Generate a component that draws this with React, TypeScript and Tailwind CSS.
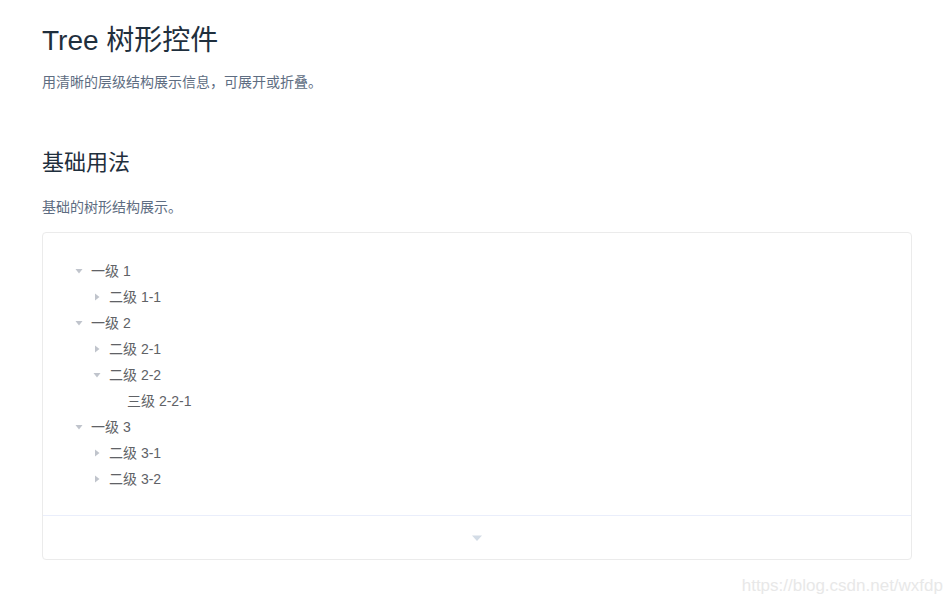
type Node = { label: string; children?: Node[]; open?: boolean };

const data: Node[] = [
  { label: "一级 1", open: true, children: [{ label: "二级 1-1", children: [{ label: "三级 1-1-1" }] }] },
  {
    label: "一级 2",
    open: true,
    children: [
      { label: "二级 2-1", children: [{ label: "三级 2-1-1" }] },
      { label: "二级 2-2", open: true, children: [{ label: "三级 2-2-1" }] },
    ],
  },
  {
    label: "一级 3",
    open: true,
    children: [
      { label: "二级 3-1", children: [{ label: "三级 3-1-1" }] },
      { label: "二级 3-2", children: [{ label: "三级 3-2-1" }] },
    ],
  },
];

function Caret({ open, hidden }: { open?: boolean; hidden?: boolean }) {
  return (
    <span className="w-[24px] h-[26px] flex items-center justify-center">
      {!hidden && (
        <svg
          width="8"
          height="8"
          viewBox="0 0 8 8"
          className={open ? "rotate-90" : ""}
        >
          <path d="M2 0.5 L6.5 4 L2 7.5 Z" fill="#c0c4cc" />
        </svg>
      )}
    </span>
  );
}

function TreeNode({ node, level }: { node: Node; level: number }) {
  const hasKids = !!node.children?.length;
  return (
    <div>
      <div
        className="flex items-center h-[26px] cursor-pointer hover:bg-[#f5f7fa]"
        style={{ paddingLeft: level * 18 }}
      >
        <Caret open={node.open} hidden={!hasKids} />
        <span className="text-[14px] text-[#606266]">{node.label}</span>
      </div>
      {hasKids && node.open &&
        node.children!.map((c) => <TreeNode key={c.label} node={c} level={level + 1} />)}
    </div>
  );
}

export default function App() {
  return (
    <div className="relative min-h-[604px] bg-white px-[42px] pt-[21px] font-['Liberation_Sans','Noto_Sans_CJK_SC',sans-serif]">
      <h2 className="text-[28px] leading-[40px] text-[#1f2f3d] font-normal">Tree 树形控件</h2>
      <p className="mt-[10px] text-[14px] leading-[22px] text-[#5e6d82]">
        用清晰的层级结构展示信息，可展开或折叠。
      </p>

      <h3 className="mt-[55px] text-[22px] leading-[30px] text-[#1f2f3d] font-normal">基础用法</h3>
      <p className="mt-[18px] text-[14px] leading-[22px] text-[#5e6d82]">基础的树形结构展示。</p>

      <div className="mt-[14px] w-[870px] border border-[#ebebeb] rounded-[4px]">
        <div className="px-[24px] pt-[25px] pb-[23px]">
          {data.map((n) => (
            <TreeNode key={n.label} node={n} level={0} />
          ))}
        </div>
        <div className="h-[44px] border-t border-[#eaeefb] flex items-center justify-center">
          <svg width="12" height="8" viewBox="0 0 12 8">
            <path d="M1 1.5 L11 1.5 L6 7 Z" fill="#d3dce6" />
          </svg>
        </div>
      </div>

      <div className="absolute right-[8px] bottom-[6px] text-[17px] text-[#e8e8e8] font-['Liberation_Sans',sans-serif]">
        https://blog.csdn.net/wxfdp
      </div>
    </div>
  );
}
